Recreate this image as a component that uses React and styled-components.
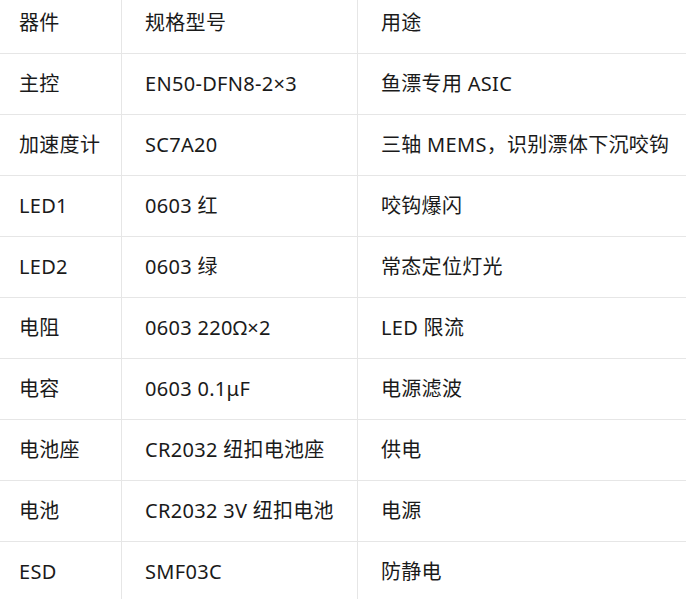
import React from "react";
import styled, { createGlobalStyle } from "styled-components";

const GlobalStyle = createGlobalStyle`
  html, body {
    margin: 0;
    padding: 0;
    background: #ffffff;
    overflow: hidden;
  }
`;

const rows = [
  ["主控", "EN50-DFN8-2×3", "鱼漂专用 ASIC"],
  ["加速度计", "SC7A20", "三轴 MEMS，识别漂体下沉咬钩"],
  ["LED1", "0603 红", "咬钩爆闪"],
  ["LED2", "0603 绿", "常态定位灯光"],
  ["电阻", "0603 220Ω×2", "LED 限流"],
  ["电容", "0603 0.1μF", "电源滤波"],
  ["电池座", "CR2032 纽扣电池座", "供电"],
  ["电池", "CR2032 3V 纽扣电池", "电源"],
  ["ESD", "SMF03C", "防静电"],
];

function App() {
  return (
    <>
      <GlobalStyle />
      <Page>
        <Table>
          <colgroup>
            <col style={{ width: 126 }} />
            <col style={{ width: 236 }} />
            <col style={{ width: 340 }} />
          </colgroup>
          <thead>
            <tr>
              <HeadCell>器件</HeadCell>
              <HeadCell>规格型号</HeadCell>
              <HeadCell>用途</HeadCell>
            </tr>
          </thead>
          <tbody>
            {rows.map((r) => (
              <tr key={r[0]}>
                {r.map((c, i) => (
                  <Cell key={i}>{c}</Cell>
                ))}
              </tr>
            ))}
          </tbody>
        </Table>
      </Page>
    </>
  );
}

const Page = styled.div`
  width: 686px;
  height: 599px;
  overflow: hidden;
`;

const Table = styled.table`
  margin: -8px 0 0 -5px;
  width: 702px;
  table-layout: fixed;
  border-collapse: collapse;
  font-family: "Noto Sans", "Noto Sans CJK SC", sans-serif;
  font-size: 20px;
  letter-spacing: 0.3px;
  color: #1a1a1a;
`;

const Cell = styled.td`
  height: 61px;
  padding: 0 0 0 23px;
  box-sizing: border-box;
  border: 1px solid #e6e6e6;
  text-align: left;
  vertical-align: middle;
  white-space: nowrap;
  line-height: 24px;
`;

const HeadCell = styled(Cell).attrs({ as: "th" })`
  font-weight: 400;
`;

export default App;
